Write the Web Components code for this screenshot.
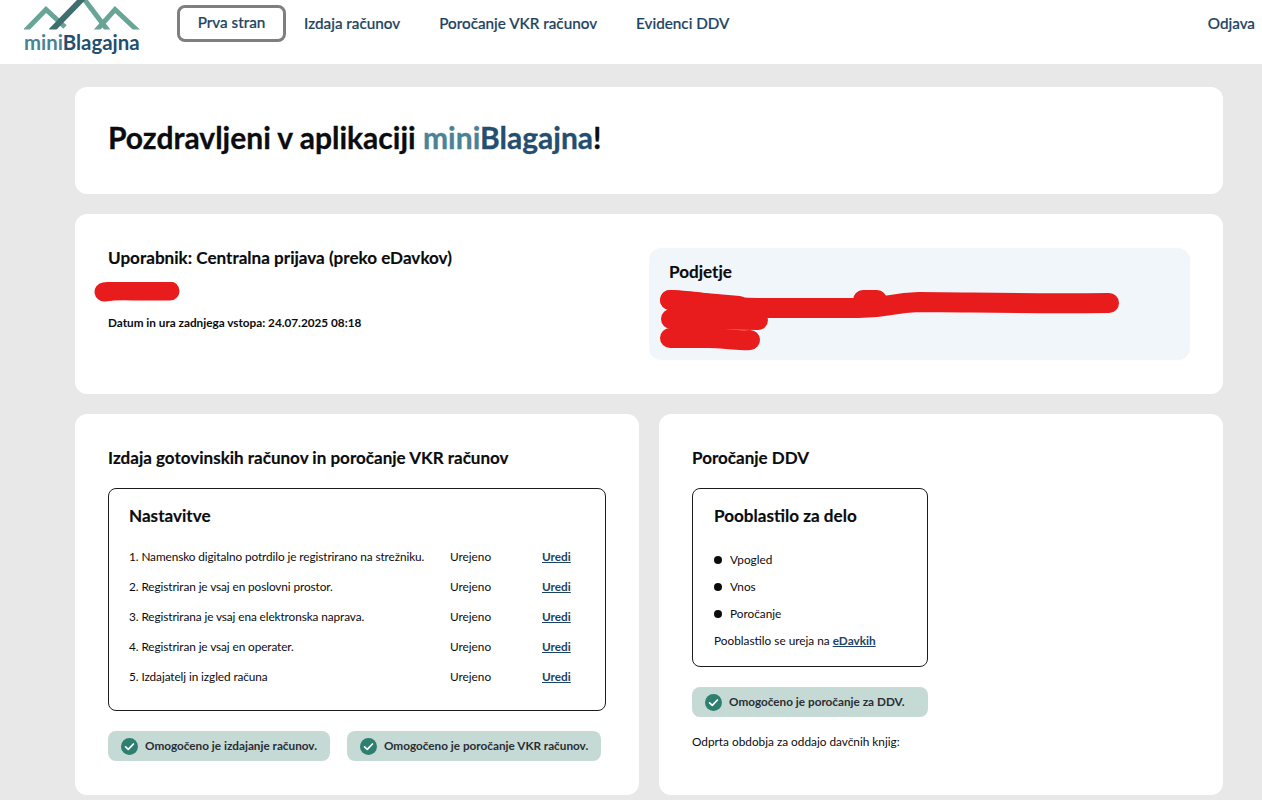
<!DOCTYPE html>
<html lang="sl"><head><meta charset="utf-8"><title>miniBlagajna</title>
<style>
html,body{margin:0;padding:0}
body{background:#e8e8e8;font-family:Lato,"Noto Sans",sans-serif;color:#0b0c0e;height:800px;overflow:hidden}
</style></head><body>
<app-header></app-header>
<app-main>
  <app-card style="--pad:31px 33px 33px;--h:107px">
    <h-title>Pozdravljeni v aplikaciji <span style="color:#4a8296;-webkit-text-stroke-color:#4a8296">mini</span><span style="color:#234e70;-webkit-text-stroke-color:#234e70">Blagajna</span>!</h-title>
  </app-card>
  <user-card></user-card>
  <app-cols>
    <app-card style="--pad:33px 33px 0;--h:381px">
      <sec-title>Izdaja gotovinskih računov in poročanje VKR računov</sec-title>
      <settings-box></settings-box>
      <app-badges>
        <ok-badge>Omogočeno je izdajanje računov.</ok-badge>
        <ok-badge>Omogočeno je poročanje VKR računov.</ok-badge>
      </app-badges>
    </app-card>
    <app-card style="--pad:33px 33px 0;--h:381px">
      <sec-title>Poročanje DDV</sec-title>
      <auth-box></auth-box>
      <app-badges><ok-badge style="--bw:236px">Omogočeno je poročanje za DDV.</ok-badge></app-badges>
      <small-line>Odprta obdobja za oddajo davčnih knjig:</small-line>
    </app-card>
  </app-cols>
</app-main>
<script>
function def(name, html){
  customElements.define(name, class extends HTMLElement{
    constructor(){super();this.attachShadow({mode:'open'}).innerHTML=html;}
  });
}
def('app-header',`<style>
:host{display:flex;height:64px;background:#fff;align-items:flex-start;box-sizing:border-box;position:relative;overflow:hidden}
.logo{display:block;width:116px;margin-left:24px;flex:none;height:64px;position:relative}
.logo svg{display:block;position:absolute;left:0;top:0}
.logo b{position:absolute;left:0;top:29px;font:700 20.4px/26px Lato,sans-serif;color:#234e70;white-space:nowrap}
.logo b i{font-style:normal;color:#4a8296}
nav{display:flex;margin-left:37px;flex:1;align-items:flex-start;padding-top:5px}
a{font:500 15.25px/24px Lato,sans-serif;color:#1d4461;text-decoration:none;white-space:nowrap;-webkit-text-stroke:.2px #1d4461}
a.nav{padding:6px 0;margin-right:39px}
a.cur{box-sizing:border-box;width:109px;height:37px;border:3.5px solid #7f7f7f;border-radius:8px;text-align:center;line-height:29px;padding:0;margin-right:18px}
a.out{margin:0 7px 0 auto;padding:6px 0}
</style>
<div class="logo"><svg width="120" height="32" viewBox="0 0 120 32"><defs><clipPath id="c"><rect x="0" y="0" width="120" height="29.5"/></clipPath></defs>
<g clip-path="url(#c)" fill="none" stroke-width="5">
<path d="M0 32 L22 9.5 L41 27" stroke="#68a596"/>
<path d="M57 -5 L85 32" stroke="#68a596"/>
<path d="M71 32 L91 9.5 L116 33" stroke="#68a596"/>
<path d="M27 31 L62 -5" stroke="#3f6e6f" stroke-width="6"/>
</g></svg><b><i>mini</i>Blagajna</b></div>
<nav><a class="nav cur" href="#">Prva stran</a><a class="nav" href="#">Izdaja računov</a><a class="nav" href="#">Poročanje VKR računov</a><a class="nav" href="#">Evidenci DDV</a><a class="out" href="#">Odjava</a></nav>`);
def('app-main',`<style>:host{display:flex;flex-direction:column;gap:20px;padding:23px 39px 0 75px}</style><slot></slot>`);
def('app-card',`<style>:host{display:block;background:#fff;border-radius:12px;padding:var(--pad);height:var(--h);box-sizing:border-box}</style><slot></slot>`);
def('h-title',`<style>:host{display:block;font:700 30px/38px Lato,sans-serif;color:#0b0c0e;white-space:nowrap;-webkit-text-stroke:.3px #0b0c0e}</style><slot></slot>`);
def('sec-title',`<style>:host{display:block;font:700 17.05px/22px Lato,sans-serif;color:#0b0c0e;margin-bottom:19px;white-space:nowrap;-webkit-text-stroke:.15px #0b0c0e}</style><slot></slot>`);
def('small-line',`<style>:host{display:block;font:400 11.8px/18px Lato,sans-serif;margin-top:16px}</style><slot></slot>`);
def('app-cols',`<style>:host{display:grid;grid-template-columns:564px 564px;gap:20px}</style><slot></slot>`);
def('app-badges',`<style>:host{display:flex;gap:17px;margin-top:20px}</style><slot></slot>`);
def('ok-badge',`<style>:host{display:flex;align-items:center;gap:7px;height:30px;width:var(--bw,auto);background:#c5dad5;border-radius:8px;padding:0 13px;font:700 11.75px/18px Lato,sans-serif;color:#2a2d34;white-space:nowrap;box-sizing:border-box}
svg{display:block;flex:none}</style>
<svg width="17" height="17" viewBox="0 0 17 17"><circle cx="8.5" cy="8.5" r="8.5" fill="#2e7f6f"/><path d="M4.6 8.8 L7.3 11.4 L12.4 6" fill="none" stroke="#fff" stroke-width="1.7" stroke-linecap="round" stroke-linejoin="round"/></svg><span><slot></slot></span>`);
def('user-card',`<style>
:host{display:grid;grid-template-columns:1fr 541px;height:180px;box-sizing:border-box;background:#fff;border-radius:12px;padding:34px 33px 34px 33px}
.u h3{margin:0;font:700 17.1px/20px Lato,sans-serif;color:#0b0c0e;white-space:nowrap;-webkit-text-stroke:.15px #0b0c0e}
.red{display:block;margin:14px 0 0 -14px}
.d{font:700 11.76px/16px Lato,sans-serif;margin-top:11px;white-space:nowrap}
.c{background:#f1f6fa;border-radius:12px;padding:14px 20px;position:relative;height:112px;box-sizing:border-box}
.c h3{margin:0;font:700 17.1px/20px Lato,sans-serif;color:#0b0c0e;-webkit-text-stroke:.15px #0b0c0e}
.c svg{position:absolute;left:0;top:0}
</style>
<div class="u"><h3>Uporabnik: Centralna prijava (preko eDavkov)</h3>
<svg class="red" width="88" height="22" viewBox="0 0 88 22"><path d="M10 10 Q24 8 40 9 L76 9" fill="none" stroke="#e81c1c" stroke-width="19" stroke-linecap="round"/></svg>
<div class="d">Datum in ura zadnjega vstopa: 24.07.2025 08:18</div></div>
<div class="c"><h3>Podjetje</h3>
<svg width="541" height="112" viewBox="0 0 541 112"><g fill="none" stroke="#e81c1c" stroke-width="20" stroke-linecap="round" stroke-linejoin="round">
<path d="M21 52 C50 52 70 60 110 60 L210 60 C240 60 240 55 270 54 C320 54 360 56 460 55"/>
<path d="M214 52 L228 52"/>
<path d="M21 52 L90 58 M22 71 L109 72 M40 62 L100 66"/>
<path d="M21 90 L60 90 C75 90 85 93 101 92"/></g></svg></div>`);
def('settings-box',`<style>
:host{display:block;border:1px solid #1a1c20;border-radius:8px;height:223px;box-sizing:border-box;padding:17px 20px 0}
h3{margin:0 0 16px;font:700 17.1px/20px Lato,sans-serif;color:#0b0c0e;-webkit-text-stroke:.15px #0b0c0e}
.r{display:grid;grid-template-columns:321px 92px 1fr;height:30px;align-items:center;font:400 11.8px/18px Lato,sans-serif;white-space:nowrap}
.r span:first-child{letter-spacing:-.09px}
a{font:700 11.8px/18px Lato,sans-serif;color:#1d4461}
</style><h3>Nastavitve</h3>
<div class="r"><span>1. Namensko digitalno potrdilo je registrirano na strežniku.</span><span>Urejeno</span><a href="#">Uredi</a></div>
<div class="r"><span>2. Registriran je vsaj en poslovni prostor.</span><span>Urejeno</span><a href="#">Uredi</a></div>
<div class="r"><span>3. Registrirana je vsaj ena elektronska naprava.</span><span>Urejeno</span><a href="#">Uredi</a></div>
<div class="r"><span>4. Registriran je vsaj en operater.</span><span>Urejeno</span><a href="#">Uredi</a></div>
<div class="r"><span>5. Izdajatelj in izgled računa</span><span>Urejeno</span><a href="#">Uredi</a></div>`);
def('auth-box',`<style>
:host{display:block;width:236px;height:179px;border:1px solid #1a1c20;border-radius:8px;box-sizing:border-box;padding:17px 20px 0 21px}
h3{margin:0 0 20px;font:700 17.1px/20px Lato,sans-serif;color:#0b0c0e;-webkit-text-stroke:.15px #0b0c0e;white-space:nowrap}
ul{margin:0;padding:0;list-style:none}
li{display:flex;align-items:center;height:27px;font:400 11.8px/18px Lato,sans-serif}
li i{display:block;flex:none;width:8px;height:8px;border-radius:50%;background:#0b0c0e;margin-right:8px}
p{margin:5px 0 0;font:400 11.8px/18px Lato,sans-serif;white-space:nowrap}
a{font-weight:700;color:#1d4461}
</style><h3>Pooblastilo za delo</h3>
<ul><li><i></i>Vpogled</li><li><i></i>Vnos</li><li><i></i>Poročanje</li></ul>
<p>Pooblastilo se ureja na <a href="#">eDavkih</a></p>`);
</script>
</body></html>
